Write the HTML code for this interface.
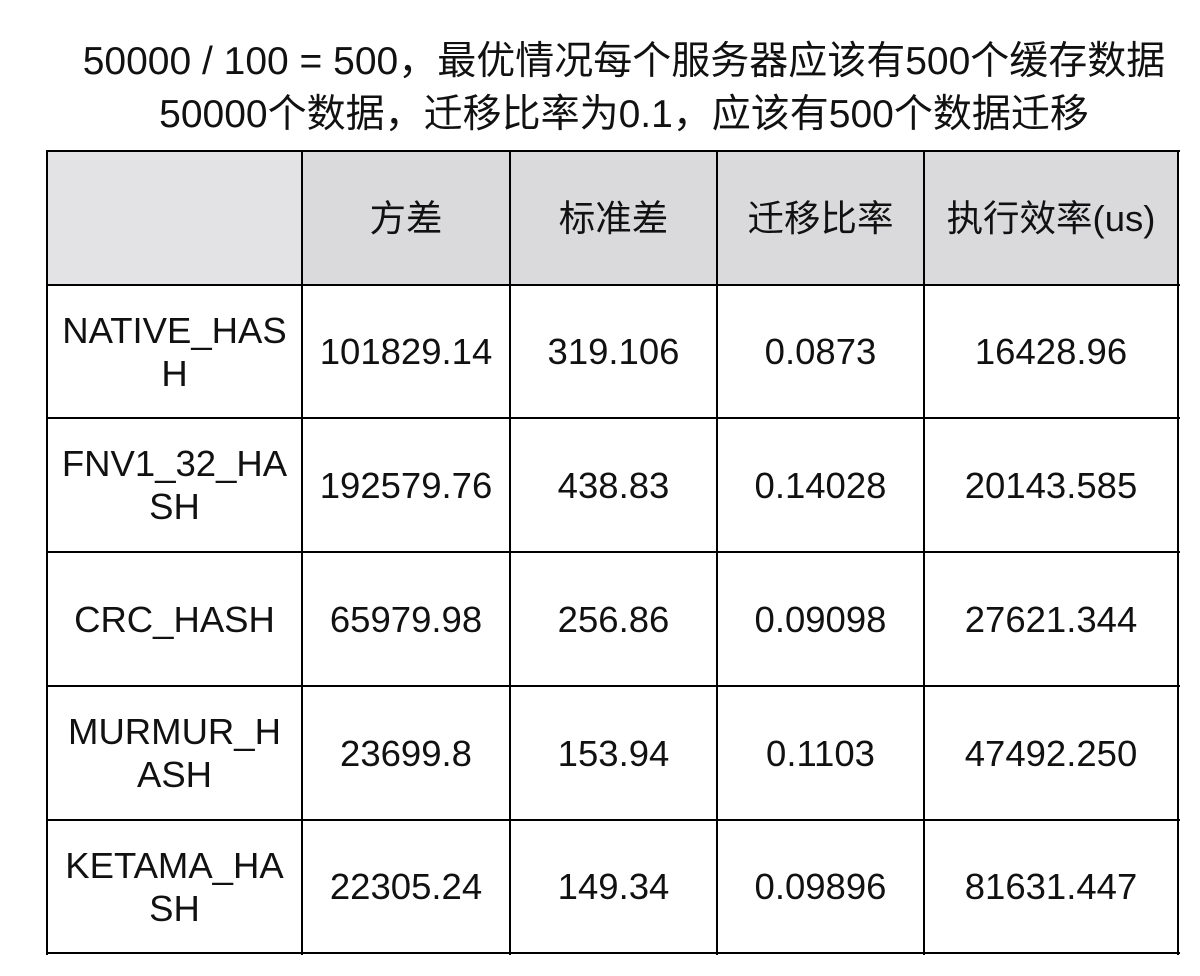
<!DOCTYPE html>
<html><head><meta charset="utf-8"><style>
body{margin:0;width:1200px;height:976px;background:#fff;position:relative;overflow:hidden;font-family:"Liberation Sans","Noto Sans CJK SC",sans-serif;color:#111}
.t{position:absolute;left:0;width:1248px;text-align:center;font-size:39px;line-height:44px;white-space:nowrap}
.c{position:absolute;display:flex;align-items:center;justify-content:center;text-align:center;font-size:36.5px;line-height:43px;box-sizing:border-box;white-space:nowrap}
.h{position:absolute;background:#000}
</style></head><body>
<div class="t" style="top:40px">50000 / 100 = 500，最优情况每个服务器应该有500个缓存数据</div>
<div class="t" style="top:93px">50000个数据，迁移比率为0.1，应该有500个数据迁移</div>
<div style="position:absolute;left:47px;top:151px;width:255px;height:134px;background:#e3e2e4"></div>
<div style="position:absolute;left:302px;top:151px;width:876px;height:134px;background:#dadadc"></div>
<div id="g"></div>
<script>
var xs=[47,302,510,717,924,1178],ys=[151,285,418,552,686,820,953];
var d=[["","方差","标准差","迁移比率","执行效率(us)"],
["NATIVE_HAS<br>H","101829.14","319.106","0.0873","16428.96"],
["FNV1_32_HA<br>SH","192579.76","438.83","0.14028","20143.585"],
["CRC_HASH","65979.98","256.86","0.09098","27621.344"],
["MURMUR_H<br>ASH","23699.8","153.94","0.1103","47492.250"],
["KETAMA_HA<br>SH","22305.24","149.34","0.09896","81631.447"]];
var h="";
for(var r=0;r<6;r++)for(var c=0;c<5;c++)h+='<div class="c" style="left:'+xs[c]+'px;top:'+ys[r]+'px;width:'+(xs[c+1]-xs[c])+'px;height:'+(ys[r+1]-ys[r])+'px">'+d[r][c]+'</div>';
for(var i=0;i<xs.length;i++)h+='<div class="h" style="left:'+(xs[i]-1)+'px;top:150px;width:2px;height:805px"></div>';
for(var i=0;i<ys.length;i++)h+='<div class="h" style="left:46px;top:'+(ys[i]-1)+'px;width:1134px;height:2px"></div>';
document.getElementById("g").innerHTML=h;
</script>
</body></html>
